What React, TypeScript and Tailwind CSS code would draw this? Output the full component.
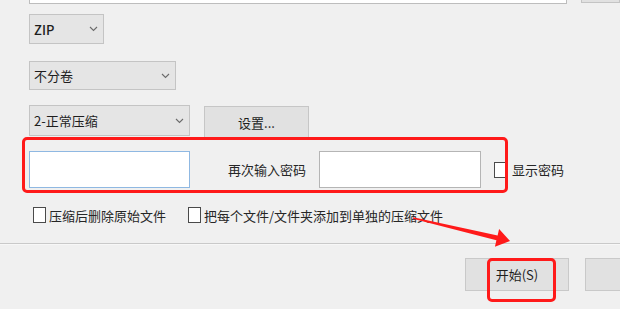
import React from "react"

const font = { fontFamily: '"Noto Sans CJK SC", "Noto Sans", sans-serif' }

function Chevron() {
  return (
    <svg width="9" height="6" viewBox="0 0 9 6" className="shrink-0">
      <path d="M1 1 L4.5 4.5 L8 1" fill="none" stroke="#6b6b6b" strokeWidth="1.1" />
    </svg>
  )
}

function Select({ label, className }: { label: string; className: string }) {
  return (
    <div
      className={`flex items-center justify-between pl-[4px] pr-[5px] bg-[#e5e5e5] border border-[#c4c4c4] text-[13px] leading-none text-[#1e1e1e] ${className}`}
    >
      <span>{label}</span>
      <Chevron />
    </div>
  )
}

function CheckBox({ label, className = "" }: { label: string; className?: string }) {
  return (
    <div className={`flex items-center gap-[3px] text-[13px] whitespace-nowrap ${className}`}>
      <div className="w-[13px] h-[16px] border border-[#4a4a4a] bg-white" />
      <span className="leading-none text-[#262626]">{label}</span>
    </div>
  )
}

export default function App() {
  return (
    <div className="relative w-[620px] h-[309px] overflow-hidden bg-[#f0f0f0]" style={font}>
      {/* cut-off fields at the top */}
      <div className="flex items-start">
        <div className="ml-[29px] w-[553px] h-[4px] bg-white border-x border-b border-[#bdbdbd]" />
        <div className="ml-[14px] w-[40px] h-[3px] bg-[#e1e1e1] border-x border-b border-[#c4c4c4]" />
      </div>

      <Select label="ZIP" className="ml-[29px] mt-[10px] w-[75px] h-[30px] font-medium" />
      <Select label="不分卷" className="ml-[29px] mt-[17px] w-[147px] h-[29px]" />

      <div className="flex items-start mt-[15px] ml-[29px] gap-[14px]">
        <Select label="2-正常压缩" className="w-[161px] h-[31px]" />
        <button className="mt-[1px] w-[105px] h-[32px] bg-[#e1e1e1] border border-[#c6c6c6] text-[13px] leading-none text-[#1e1e1e]">
          设置...
        </button>
      </div>

      <div className="flex items-center mt-[13px] h-[37px]">
        <div className="shrink-0 ml-[29px] w-[161px] h-[37px] bg-white border border-[#8fb8e2]" />
        <span className="shrink-0 ml-[38px] w-[78px] whitespace-nowrap text-[13px] leading-none text-[#262626]">再次输入密码</span>
        <div className="shrink-0 ml-[13px] w-[162px] h-[37px] bg-white border border-[#b5b5b5]" />
        <CheckBox label="显示密码" className="ml-[13px] gap-[5px]" />
      </div>

      <div className="flex items-center mt-[18px] h-[18px]">
        <CheckBox label="压缩后删除原始文件" className="ml-[33px]" />
        <CheckBox label="把每个文件/文件夹添加到单独的压缩文件" className="ml-[22px]" />
      </div>

      <div className="mt-[19px] border-t border-[#c9c9c9] border-b border-b-[#f7f7f7]" />

      <div className="flex mt-[13px] ml-[465px] gap-[16px]">
        <button className="shrink-0 w-[104px] h-[33px] bg-[#e1e1e1] border border-[#c9c9c9] text-[13px] leading-none text-[#1e1e1e]">
          开始(S)
        </button>
        <button className="shrink-0 w-[104px] h-[33px] bg-[#e1e1e1] border border-[#c9c9c9]" />
      </div>

      {/* red annotations */}
      <div className="absolute left-[22px] top-[137px] w-[486px] h-[56px] border-[3px] border-[#ff1a1a] rounded-[5px] pointer-events-none" />
      <div className="absolute left-[487px] top-[258px] w-[69px] h-[44px] border-[3px] border-[#ff1a1a] rounded-[5px] pointer-events-none" />
      <svg className="absolute left-0 top-0 pointer-events-none" width="620" height="309" viewBox="0 0 620 309">
        <polygon
          points="413.2,217.2 497.6,235.5 499.1,229.1 510,241 494.9,246.7 496.4,240.3 412.8,218.8"
          fill="#ff1a1a"
        />
      </svg>
    </div>
  )
}
